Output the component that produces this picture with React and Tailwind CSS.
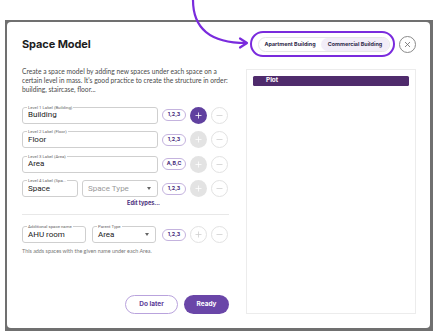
import React from "react";

const font = { fontFamily: "Inter, 'Noto Sans', sans-serif" };
const lato = { fontFamily: "Lato, 'Noto Sans', sans-serif" };
const roboto = { fontFamily: "Roboto, 'Noto Sans', sans-serif" };

function Field({ label, value, w, placeholder, select }) {
  return (
    <div
      className={`relative h-[17px] ${w} shrink-0 border border-[#cfcfcf] rounded-[3px] flex items-center pl-[5px] pr-[6px] bg-white`}
    >
      {label && (
        <span
          className="absolute left-[4px] top-[-3px] bg-white px-[1px] text-[4.3px] leading-[5px] text-[#666] whitespace-nowrap"
          style={roboto}
        >
          {label}
        </span>
      )}
      <span
        className={`text-[8px] leading-[10px] flex-1 ${placeholder ? "text-[#9a9a9a]" : "text-[#222]"}`}
        style={roboto}
      >
        {value}
      </span>
      {select && (
        <span className="w-0 h-0 border-l-[2.5px] border-r-[2.5px] border-t-[3px] border-l-transparent border-r-transparent border-t-[#666]" />
      )}
    </div>
  );
}

function Pill({ text }) {
  return (
    <div
      className="w-[24px] h-[12px] shrink-0 rounded-full border border-[#c4b3de] flex items-center justify-center text-[5.3px] font-bold text-[#4a2e7c]"
      style={font}
    >
      {text}
    </div>
  );
}

function Plus({ kind }) {
  const cls =
    kind === "active"
      ? "bg-[#60409f] text-white"
      : kind === "gray"
      ? "bg-[#e3e3e3] text-white"
      : "bg-white border border-[#e2e2e2] text-[#cfcfcf]";
  return (
    <div className={`w-[17px] h-[17px] shrink-0 rounded-full flex items-center justify-center ${cls}`}>
      <svg width="7" height="7" viewBox="0 0 7 7">
        <path d="M3.5 0.5v6M0.5 3.5h6" stroke="currentColor" strokeWidth="0.8" fill="none" />
      </svg>
    </div>
  );
}

function Minus() {
  return (
    <div className="w-[17px] h-[17px] shrink-0 rounded-full border border-[#e2e2e2] bg-white flex items-center justify-center text-[#cfcfcf]">
      <svg width="7" height="7" viewBox="0 0 7 7">
        <path d="M0.5 3.5h6" stroke="currentColor" strokeWidth="0.8" fill="none" />
      </svg>
    </div>
  );
}

function Row({ children, pill, plus }) {
  return (
    <div className="flex items-center h-[17px]">
      {children}
      <div className="ml-[4px] flex items-center gap-[4px]">
        <Pill text={pill} />
        <Plus kind={plus} />
        <Minus />
      </div>
    </div>
  );
}

export default function App() {
  return (
    <div className="w-[437px] h-[332px] bg-white relative overflow-hidden" style={font}>
      <div className="ml-[5px] mt-[20px] w-[428px] h-[311px] bg-[#707070] pl-[2px] pt-[2px] pr-[3px] pb-[3px]">
        <div className="w-full h-full bg-white rounded-[4px] flex flex-col pl-[15px] pr-[14px]">
          {/* header */}
          <div className="mt-[8px] h-[28px] flex items-center justify-between">
            <h1 className="text-[11px] font-bold text-[#1d1d1d] tracking-[-0.1px]">Space Model</h1>
            <div className="flex items-center gap-[9px]">
              <div className="relative w-[132px] h-[15px] rounded-full border border-[#e6e6e6] flex items-center text-[5.4px] font-bold text-[#2e2a4a]">
                <div className="flex-1 h-full flex items-center justify-center">Apartment Building</div>
                <div className="w-[68px] h-full rounded-full bg-[#f2edf8] flex items-center justify-center">
                  Commercial Building
                </div>
                <div className="absolute left-[-9px] right-[-6px] top-[-7px] bottom-[-6px] rounded-full border-[2.5px] border-[#7a2bdd]" />
              </div>
              <div className="w-[17px] h-[17px] rounded-full border border-[#8a8a8a] flex items-center justify-center text-[#6a6a6a]">
                <svg width="7" height="7" viewBox="0 0 7 7">
                  <path d="M1 1l5 5M6 1l-5 5" stroke="currentColor" strokeWidth="0.8" fill="none" />
                </svg>
              </div>
            </div>
          </div>

          {/* body */}
          <div className="mt-[9px] flex gap-[17px] flex-1 pb-[14px]">
            <div className="w-[207px] flex flex-col">
              <p className="text-[6.7px] leading-[9px] text-[#4a4a4a] whitespace-nowrap" style={lato}>
                Create a space model by adding new spaces under each space on a
                <br />
                certain level in mass. It's good practice to create the structure in order:
                <br />
                building, staircase, floor...
              </p>
              <div className="mt-[12.5px] flex flex-col gap-[7.5px]">
                <Row pill="1,2,3" plus="active">
                  <Field label="Level 1 Label (Building)" value="Building" w="w-[136px]" />
                </Row>
                <Row pill="1,2,3" plus="gray">
                  <Field label="Level 2 Label (Floor)" value="Floor" w="w-[136px]" />
                </Row>
                <Row pill="A,B,C" plus="gray">
                  <Field label="Level 3 Label (Area)" value="Area" w="w-[136px]" />
                </Row>
                <Row pill="1,2,3" plus="gray">
                  <div className="flex gap-[4px]">
                    <Field label="Level 4 Label (Spa..." value="Space" w="w-[56px]" />
                    <Field label="" value="Space Type" w="w-[76px]" placeholder select />
                  </div>
                </Row>
              </div>
              <div className="mt-[2px] text-center pl-[36px] text-[5.6px] leading-[8px] font-bold text-[#4a2e7c]">
                Edit types...
              </div>
              <div className="mt-[7px] h-px bg-[#e8e8e8]" />
              <div className="mt-[11px]">
                <div className="flex items-center h-[17px]">
                  <div className="flex gap-[6px]">
                    <Field label="Additional space name" value="AHU room" w="w-[64px]" />
                    <Field label="Parent Type" value="Area" w="w-[64px]" select />
                  </div>
                  <div className="ml-[6px] flex items-center gap-[4px]">
                    <Pill text="1,2,3" />
                    <Plus kind="outline" />
                    <Minus />
                  </div>
                </div>
              </div>
              <p className="mt-[5px] text-[5.4px] leading-[7px] text-[#777]" style={lato}>
                This adds spaces with the given name under each Area.
              </p>
              <div className="mt-auto flex justify-end gap-[6px]">
                <button className="w-[53px] h-[19px] rounded-full border border-[#b9a3dd] text-[6.5px] font-bold text-[#5b3a98]">
                  Do later
                </button>
                <button className="w-[45px] h-[19px] rounded-full bg-[#6a46a8] text-[6.5px] font-bold text-white">
                  Ready
                </button>
              </div>
            </div>

            <div className="w-[170px] mt-[2px] border border-[#ececec] px-[6px] pt-[6px]">
              <div className="h-[9.5px] rounded-[1.5px] bg-[#4f2b6c] flex items-center pl-[13px] text-[6.4px] font-bold text-white">
                Plot
              </div>
            </div>
          </div>
        </div>
      </div>

      {/* annotation arrow */}
      <svg className="absolute left-0 top-0 pointer-events-none" width="437" height="60" viewBox="0 0 437 60">
        <path d="M193 0 C193 28 210 43 246 43" stroke="#7a2bdd" strokeWidth="2.2" fill="none" strokeLinecap="round" />
        <path d="M240 38.5 L247 43 L240 47.5" stroke="#7a2bdd" strokeWidth="2.2" fill="none" strokeLinecap="round" strokeLinejoin="round" />
      </svg>
    </div>
  );
}
